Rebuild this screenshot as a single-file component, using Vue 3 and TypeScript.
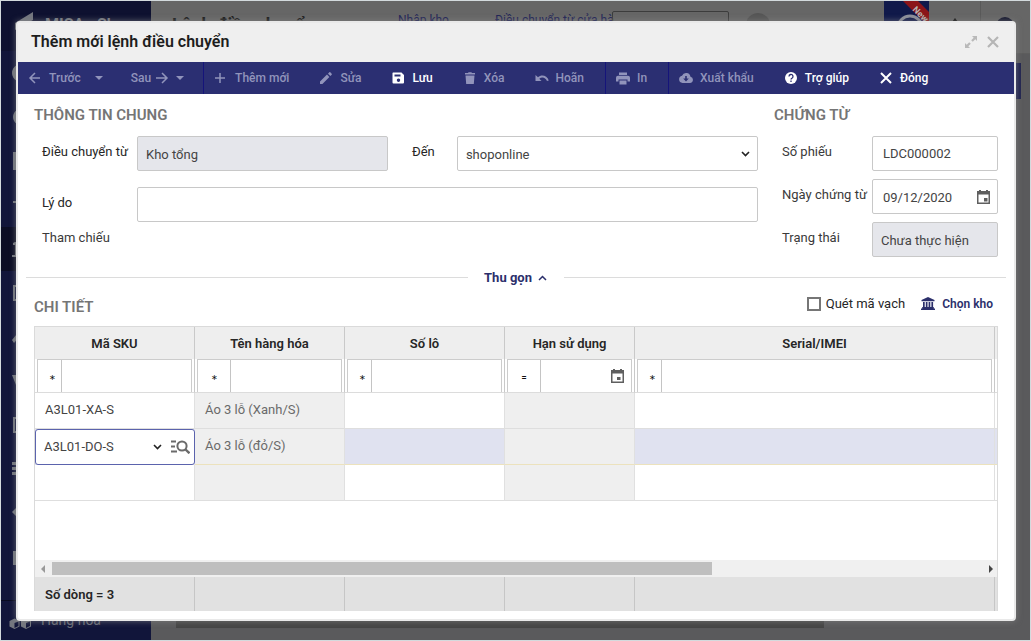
<script setup lang="ts">
import { ref } from 'vue'

interface Tool {
  label: string
  icon: string
  active?: boolean
  caret?: boolean
  trailing?: boolean
  divider?: boolean
}

const icons: Record<string, string> = {
  back: 'M7 2 2 7l5 5M2 7h10',
  forward: 'M7 2l5 5-5 5M12 7H1',
  plus: 'M6 2v10M1 7h10',
  close: 'M2 2l10 10M12 2 2 12',
}

const solids: Record<string, string> = {
  edit: 'M1 10.6V13h2.4l7-7L8 3.6zM12.7 3.7a.8.8 0 0 0 0-1L11.300 1.300a.8.8 0 0 0-1 0L9 2.700 11.400 5z',
  save: 'M2 1.500h8.500L13 4v7.500a1 1 0 0 1-1 1H2.500a1 1 0 0 1-1-1v-9.500zM3.500 3.500v2h6v-2zM7.500 7.500a1.700 1.700 0 1 0 .01 0z',
  trash: 'M2.500 4.500h9l-.7 8.500H3.200zM2 2h3l.6-.8h2.800l.6.8h3v1.500H2z',
  undo: 'M0.500 4v6h6L4.300 7.800C7 5.500 10.500 6.500 12 10l1.800-.6C12 4.500 6.500 3 3 6.300z',
  print: 'M3 1.500h8V4H3zM2 4.700h10a2 2 0 0 1 2 2V10.500h-2.500V8.500h-9v2H0V6.700a2 2 0 0 1 2-2zM3.500 9.500h7v4h-7z',
  cloud: 'M11.500 5.700A4.500 4.500 0 0 0 3 4.700 3.700 3.700 0 0 0 3.500 12h7.500a3.200 3.200 0 0 0 .5-6.300zM6.200 5h1.600v2.500h2L7 10.500l-2.800-3h2z',
}

const tools: Tool[] = [
  { label: 'Trước', icon: 'back', caret: true },
  { label: 'Sau', icon: 'forward', caret: true, trailing: true, divider: true },
  { label: 'Thêm mới', icon: 'plus' },
  { label: 'Sửa', icon: 'edit' },
  { label: 'Lưu', icon: 'save', active: true },
  { label: 'Xóa', icon: 'trash' },
  { label: 'Hoãn', icon: 'undo', divider: true },
  { label: 'In', icon: 'print', divider: true },
  { label: 'Xuất khẩu', icon: 'cloud' },
  { label: 'Trợ giúp', icon: 'help', active: true },
  { label: 'Đóng', icon: 'close', active: true },
]

const columns = [
  { label: 'Mã SKU', key: 'sku', op: '∗' },
  { label: 'Tên hàng hóa', key: 'name', op: '∗' },
  { label: 'Số lô', key: 'lot', op: '∗' },
  { label: 'Hạn sử dụng', key: 'expiry', op: '=' },
  { label: 'Serial/IMEI', key: 'serial', op: '∗' },
]

const rows = ref([
  { sku: 'A3L01-XA-S', name: 'Áo 3 lỗ (Xanh/S)', selected: false },
  { sku: 'A3L01-DO-S', name: 'Áo 3 lỗ (đỏ/S)', selected: true },
  { sku: '', name: '', selected: false },
])

const destination = ref('shoponline')
const reason = ref('')
const number = ref('LDC000002')
const date = ref('09/12/2020')
const scan = ref(false)

const navIcons = [
  'M9 0a9 9 0 1 0 .01 0z',
  'M9 1a8 8 0 1 0 .01 0z',
  'M1 0h16v18H1z',
  'M1 5h16v2h-6v9H7V7H1z',
  'M3 2h4v13h3v2H0v-2h3V5H1V3z',
  'M1 1h16v16H1zM3 3v12h12V3z',
  'M9 1 0 12l2 3 7-8 7 8 2-3z',
  'M0 3h5l2 8h9v2H4z',
  'M1 1h16v16H1zM3 3v12h12V3z',
  'M0 2h4v3H0zM0 7h4v3H0zM0 12h4v3H0zM6 2h11v3H6zM6 7h11v3H6zM6 12h11v3H6z',
  'M0 8l6-6v4h10v4H6v4z',
  'M1 3h16v14H1zM4 0h3v5H4z',
]
</script>

<template>
  <div class="page">
    <aside class="sidebar">
      <div class="brand">
        <svg width="20" height="26" viewBox="0 0 20 26"><path d="M0 11 18 0v8L0 18z" /></svg>
        <span>MISA eShop</span>
      </div>
      <nav>
        <div v-for="(d, i) in navIcons" :key="i" class="nav-row" :class="{ current: i === 4 }">
          <svg width="18" height="18" viewBox="0 0 18 18"><path :d="d" fill-rule="evenodd" /></svg>
        </div>
      </nav>
      <a class="nav-last" href="#">
        <svg width="23" height="18" viewBox="0 0 23 18">
          <path d="M5.500 7.500 10.500 10v5.500l-5 2.500-5-2.500V10zM17 7.500l5 2.500v5.500l-5 2.500-5-2.500V10zM11 0l4 2v4l-4 2-4-2V2z" />
          <path d="M5.500 12v5l4-2v-4.500zM17 12v5l4-2v-4.500z" fill="#11153a" />
        </svg>
        Hàng hóa
      </a>
    </aside>

    <main class="backdrop">
      <header class="app-header">
        <h2>Lệnh điều chuyển</h2>
        <a class="link-a" href="#">Nhập kho</a>
        <a class="link-b" href="#">Điều chuyển từ cửa hà</a>
        <span class="search"></span>
        <span class="avatar"></span>
        <span class="logo">
          <svg width="45" height="40" viewBox="0 0 45 40">
            <circle cx="26" cy="27" r="12" fill="none" stroke="#8c8f9b" stroke-width="3" />
            <path d="M19 0h15l11 11v15z" fill="#8b1519" />
            <text x="28" y="9" transform="rotate(45 28 9)" fill="#b5b5b5" font-size="9" font-weight="700">New</text>
          </svg>
        </span>
        <svg class="up" width="12" height="10" viewBox="0 0 12 10"><path d="M6 0l6 8H0z" fill="#111" /></svg>
        <span class="dot"></span>
      </header>
      <div class="app-body"><span class="strip"></span></div>
      <div class="app-scroll"><span></span></div>
    </main>

    <section class="dialog" role="dialog" aria-labelledby="dialog-title">
      <header class="dialog-head">
        <h1 id="dialog-title">Thêm mới lệnh điều chuyển</h1>
        <button type="button" aria-label="Phóng to">
          <svg width="12" height="12" viewBox="0 0 12 12">
            <path d="M7 0h5v5l-1.700-1.700-2.500 2.500L6.200 4.200l2.500-2.500zM5 12H0V7l1.700 1.700 2.500-2.500 1.600 1.600-2.500 2.500z" fill="#b9b9b9" />
          </svg>
        </button>
        <button type="button" aria-label="Đóng cửa sổ">
          <svg width="12" height="12" viewBox="0 0 12 12"><path d="M1 1l10 10M11 1 1 11" stroke="#b5b5b5" stroke-width="2.200" /></svg>
        </button>
      </header>

      <div class="toolbar" role="toolbar">
        <button
          v-for="t in tools"
          :key="t.label"
          type="button"
          :class="{ active: t.active, trailing: t.trailing, divider: t.divider }"
        >
          <svg v-if="t.icon === 'help'" width="14" height="14" viewBox="0 0 14 14">
            <circle cx="7" cy="7" r="6" fill="currentColor" />
            <path d="M5 5.500a2 2 0 1 1 3 1.700c-.7.400-1 .7-1 1.400M7 9.600v1.300" fill="none" stroke="#2b2f72" stroke-width="1.300" />
          </svg>
          <svg v-else-if="solids[t.icon]" width="14" height="14" viewBox="0 0 14 14">
            <path :d="solids[t.icon]" fill="currentColor" fill-rule="evenodd" />
          </svg>
          <svg v-else width="14" height="14" viewBox="0 0 14 14">
            <path :d="icons[t.icon]" fill="none" stroke="currentColor" :stroke-width="t.icon === 'close' ? 2 : 1.5" />
          </svg>
          <span>{{ t.label }}</span>
          <i v-if="t.caret"></i>
        </button>
      </div>

      <div class="content">
        <form class="form" @submit.prevent>
          <section class="general">
            <h3>THÔNG TIN CHUNG</h3>
            <div class="general-grid">
              <label for="from">Điều chuyển từ</label>
              <input id="from" class="field wide" value="Kho tổng" disabled />
              <label for="to" class="to">Đến</label>
              <div class="box select">
                <select id="to" v-model="destination"><option>shoponline</option></select>
                <svg width="9" height="6" viewBox="0 0 9 6"><path d="M1 1l3.500 3.500L8 1" fill="none" stroke="#222" stroke-width="1.600" /></svg>
              </div>
              <label for="reason" class="second">Lý do</label>
              <input id="reason" v-model="reason" class="field second span" />
              <span class="label">Tham chiếu</span>
            </div>
          </section>
          <section class="voucher">
            <h3>CHỨNG TỪ</h3>
            <div class="voucher-grid">
              <label for="number">Số phiếu</label>
              <input id="number" v-model="number" class="field" />
              <label for="date">Ngày chứng từ</label>
              <div class="box">
                <input id="date" v-model="date" />
                <button type="button" aria-label="Chọn ngày">
                  <svg width="13" height="14" viewBox="0 0 13 14"><path d="M0 1h2V0h2v1h5V0h2v1h2v13H0zM1.500 4.500v8h10v-8zM7 8h3.500v3.500H7z" fill="#5f5f5f" fill-rule="evenodd" /></svg>
                </button>
              </div>
              <label for="status">Trạng thái</label>
              <input id="status" class="field status" value="Chưa thực hiện" disabled />
            </div>
          </section>
        </form>

        <div class="collapse">
          <button type="button">
            Thu gọn
            <svg width="9" height="6" viewBox="0 0 9 6"><path d="M1 5l3.500-3.500L8 5" fill="none" stroke="#2b2f6b" stroke-width="1.500" /></svg>
          </button>
        </div>

        <div class="detail-head">
          <h3>CHI TIẾT</h3>
          <div class="detail-actions">
            <label class="scan"><input v-model="scan" type="checkbox" />Quét mã vạch</label>
            <button type="button">
              <svg width="14" height="13" viewBox="0 0 14 13">
                <path d="M7 0l6.500 3v1.200H.5V3zM2 5h1.700v5H2zM4.800 5h1.700v5H4.800zM7.600 5h1.700v5H7.600zM10.400 5h1.700v5h-1.700zM1.200 10h11.600v1.500H1.200zM0 11.500h14V13H0z" fill="#2b2f6b" />
              </svg>
              Chọn kho
            </button>
          </div>
        </div>

        <div class="grid">
          <table>
            <colgroup>
              <col class="c160" /><col class="c150" /><col class="c160" /><col class="c130" /><col /><col class="c2" />
            </colgroup>
            <thead>
              <tr class="heads">
                <th v-for="c in columns" :key="c.key" scope="col">{{ c.label }}</th>
                <td></td>
              </tr>
              <tr class="filters">
                <td v-for="c in columns" :key="c.key">
                  <div class="filter" :class="c.key">
                    <button type="button" :aria-label="'Điều kiện ' + c.label">{{ c.op }}</button>
                    <div class="filter-value">
                      <input :aria-label="'Lọc ' + c.label" />
                      <svg v-if="c.key === 'expiry'" width="13" height="14" viewBox="0 0 13 14"><path d="M0 1h2V0h2v1h5V0h2v1h2v13H0zM1.500 4.500v8h10v-8zM6 8h3.500v3H6z" fill="#5f5f5f" fill-rule="evenodd" /></svg>
                    </div>
                  </div>
                </td>
                <td></td>
              </tr>
            </thead>
            <tbody>
              <tr v-for="(r, i) in rows" :key="i" :class="{ selected: r.selected }">
                <td v-if="r.selected" class="edit-cell">
                  <div class="editor">
                    <input v-model="r.sku" aria-label="Mã SKU" />
                    <button type="button" aria-label="Mở danh sách">
                      <svg width="9" height="6" viewBox="0 0 9 6"><path d="M1 1l3.500 3.500L8 1" fill="none" stroke="#222" stroke-width="1.600" /></svg>
                    </button>
                    <button type="button" aria-label="Tìm kiếm">
                      <svg width="19" height="14" viewBox="0 0 19 14">
                        <path d="M0 1.500h5M0 6.500h4M0 11.500h6" stroke="#6b6b6b" stroke-width="2" />
                        <circle cx="11" cy="6" r="4.600" fill="none" stroke="#6b6b6b" stroke-width="2" />
                        <path d="M14 9l4.500 4.300" stroke="#6b6b6b" stroke-width="2.400" />
                      </svg>
                    </button>
                  </div>
                </td>
                <td v-else>{{ r.sku }}</td>
                <td class="locked">{{ r.name }}</td>
                <td></td>
                <td class="locked"></td>
                <td></td>
                <td></td>
              </tr>
            </tbody>
          </table>
          <div class="space"></div>
          <div class="scrollbar">
            <i class="left"></i>
            <div class="track"><span></span></div>
            <i class="right"></i>
          </div>
          <div class="summary">
            <span class="c160">Số dòng = 3</span><span class="c150"></span><span class="c160"></span><span class="c130"></span><span class="rest"></span><span class="c2"></span>
          </div>
        </div>
      </div>
    </section>
  </div>
</template>

<style>
body {
  margin: 0;
}
</style>

<style scoped>
.page,
.page * {
  box-sizing: border-box;
}
.page {
  position: relative;
  display: flex;
  height: 100vh;
  border: 1px solid #d3dadd;
  overflow: hidden;
  font: 400 13px/20px Roboto, "Liberation Sans", sans-serif;
  color: #262626;
}
h1,
h2,
h3 {
  margin: 0;
}
button,
input,
select {
  font: inherit;
  color: inherit;
  border: 0;
  padding: 0;
  margin: 0;
  background: none;
  outline: 0;
  min-width: 0;
}
a {
  text-decoration: none;
}
svg {
  display: block;
  flex: none;
}

.sidebar {
  flex: none;
  width: 150px;
  display: flex;
  flex-direction: column;
  background: #11153a;
  color: #777b83;
  fill: #74777f;
  overflow: hidden;
}
.brand {
  display: flex;
  flex: none;
  gap: 10px;
  height: 50px;
  padding: 11px 0 0 14px;
  font-size: 16px;
  line-height: 26px;
  font-weight: 700;
  background: #0e1130;
}
.nav-row {
  display: flex;
  align-items: center;
  height: 44px;
  padding-left: 11px;
}
.current {
  background: #0b0d24;
}
.nav-last {
  display: flex;
  align-items: center;
  gap: 9px;
  height: 40px;
  margin-top: auto;
  padding: 0 0 2px 8px;
  border-top: 1px solid #080a20;
  font-size: 14px;
  color: #6b6e78;
}

.backdrop {
  flex: 1;
  display: flex;
  flex-direction: column;
  background: #5a5a5c;
}
.app-header {
  display: flex;
  align-items: flex-start;
  height: 53px;
  padding-left: 21px;
  background: #666;
  border-bottom: 1px solid #5d5d5d;
  overflow: hidden;
}
.app-header > * {
  flex: none;
}
.app-header h2 {
  width: 226px;
  margin-top: 12px;
  font-size: 18px;
  line-height: 24px;
  font-weight: 700;
  color: #1b1b1b;
}
.app-header a {
  margin-top: 9px;
  font-size: 12px;
  color: #1f2356;
  white-space: nowrap;
}
.link-a {
  width: 97px;
}
.link-b {
  width: 117px;
}
.search {
  width: 117px;
  height: 32px;
  margin-top: 10px;
  border: 1px solid #3c3c3c;
  border-radius: 2px;
}
.avatar {
  width: 24px;
  height: 24px;
  margin: 12px 0 0 17px;
  border-radius: 50%;
  background: #565656;
}
.logo {
  width: 45px;
  height: 40px;
  margin-left: 114px;
  background: #10194a;
}
.up {
  margin: 17px 19px 0 20px;
}
.dot {
  align-self: stretch;
  border-left: 1px solid #595959;
  padding: 16px 0 0 15px;
}
.dot::after {
  content: "";
  display: block;
  width: 18px;
  height: 18px;
  border-radius: 50%;
  background: #14162e;
}
.app-body {
  flex: 1;
  padding: 9px 9px 0 0;
}
.strip {
  display: block;
  height: 36px;
  background: #20234f;
}
.app-scroll {
  height: 20px;
  padding: 1px 206px 12px 25px;
}
.app-scroll span {
  display: block;
  height: 7px;
  background: #454545;
}

.dialog {
  position: absolute;
  inset: 20px 14px 19px 15px;
  display: flex;
  flex-direction: column;
  border: 2px solid #e9e9e9;
  border-radius: 4px;
  background: #fff;
  box-shadow: 0 0 6px rgba(136, 136, 136, 0.7);
  overflow: hidden;
}
.dialog-head {
  display: flex;
  flex: none;
  align-items: center;
  gap: 10px;
  height: 39px;
  padding: 0 15px 2px 13px;
  background: #efefef;
}
.dialog-head h1 {
  flex: 1;
  font-size: 16px;
  line-height: 24px;
  font-weight: 600;
  color: #1d1d1d;
}

.toolbar {
  display: flex;
  flex: none;
  height: 32px;
  background: #2b2f72;
}
.toolbar button {
  display: flex;
  align-items: center;
  gap: 7px;
  padding: 0 20px 0 10px;
  font-size: 12px;
  font-weight: 500;
  color: #9194bb;
  white-space: nowrap;
}
.toolbar .active {
  color: #fff;
}
.toolbar .divider {
  padding-right: 21px;
  border-right: 1px solid #15147a;
}
.toolbar i {
  border: 4px solid transparent;
  border-top-color: currentColor;
  border-bottom: 0;
  margin-left: 7px;
}
.toolbar .trailing {
  gap: 4px;
  padding: 0 19px 0 8px;
}
.trailing svg {
  order: 1;
}
.trailing i {
  order: 2;
  margin-left: 3px;
}

.content {
  flex: 1;
  display: flex;
  flex-direction: column;
  padding: 11px 16px 8px;
}
h3 {
  font-size: 15px;
  line-height: 20px;
  font-weight: 600;
  color: #757575;
}
.form {
  display: flex;
  gap: 16px;
}
.general {
  flex: 1;
}
.voucher {
  flex: none;
  width: 224px;
}
.general-grid,
.voucher-grid {
  display: grid;
  margin-top: 11px;
  padding-left: 8px;
}
.general-grid {
  grid-template-columns: 95px 5fr 69px 6fr;
}
.voucher-grid {
  grid-template-columns: 90px minmax(0, 1fr);
  row-gap: 8px;
}
.general-grid label,
.voucher-grid label,
.label {
  line-height: 32px;
  white-space: nowrap;
}
.label,
.voucher-grid label {
  color: #3a3a3a;
}
.to {
  padding-left: 24px;
}
.second {
  margin-top: 16px;
}
.span {
  grid-column: 2 / -1;
}
.field,
.box {
  height: 35px;
  border: 1px solid #c8c8c8;
  border-radius: 2px;
  background: #fff;
  color: #444;
}
.field {
  width: 100%;
  padding: 0 10px;
}
.field.wide,
.field.status {
  padding: 2px 8px 0;
}
.field:disabled {
  background: #e5e6eb;
}
.box {
  display: flex;
  align-items: center;
  padding: 0 7px 0 10px;
}
.box input {
  flex: 1;
  padding-top: 2px;
}
.select {
  padding-left: 8px;
}
.select select {
  flex: 1;
  padding-top: 2px;
  appearance: none;
}

.collapse {
  display: flex;
  align-items: center;
  gap: 16px;
  height: 20px;
  margin: 10px -8px 0;
}
.collapse::before,
.collapse::after {
  content: "";
  flex: 1;
  height: 1px;
  background: #dcdcdc;
}
.collapse button {
  display: flex;
  align-items: center;
  gap: 6px;
  padding: 1px 1px 0 0;
  font-weight: 700;
  color: #2b2f6b;
}
.detail-head {
  display: flex;
  align-items: center;
  justify-content: space-between;
  height: 39px;
}
.detail-actions {
  display: flex;
  align-items: center;
  gap: 16px;
  margin-bottom: 6px;
  padding-right: 5px;
}
.scan {
  display: flex;
  align-items: center;
  gap: 5px;
}
.scan input {
  appearance: none;
  width: 14px;
  height: 14px;
  border: 2px solid #767676;
}
.detail-actions button {
  display: flex;
  align-items: center;
  gap: 7px;
  font-size: 12px;
  font-weight: 600;
  color: #2b2f6b;
}

.grid {
  flex: 1;
  display: flex;
  flex-direction: column;
  border: 1px solid #dadada;
  border-bottom: 0;
}
.c160 {
  width: 160px;
}
.c150 {
  width: 150px;
}
.c130 {
  width: 130px;
}
.c2 {
  width: 2px;
}
table {
  width: 100%;
  table-layout: fixed;
  border-collapse: separate;
  border-spacing: 0;
}
th,
td {
  padding: 0 0 0 10px;
  border-right: 1px solid #e0e0e0;
  text-align: left;
}
tr > :last-child {
  padding: 0;
  border-right: 0;
}
.heads > * {
  height: 32px;
  padding: 2px 0 0;
  background: #eee;
  border-right-color: #c9c9c9;
  text-align: center;
  font-weight: 600;
}
.filters td {
  height: 34px;
  padding: 0 2px;
  border-right-color: #c9c9c9;
  border-bottom: 1px solid #dcdcdc;
}
.filters td:last-child {
  padding: 0;
}
.filter {
  display: flex;
  height: 33px;
  border: 1px solid #ccc;
  border-bottom: 0;
}
.filter button {
  flex: none;
  width: 24px;
  padding: 3px 0 0 6px;
  border-right: 1px solid #c4c4c4;
  font-size: 8px;
  color: #111;
}
.filter.name button,
.filter.expiry button {
  width: 33px;
  padding-left: 0;
}
.filter.expiry button {
  font-size: 10px;
}
.filter-value {
  flex: 1;
  display: flex;
  align-items: center;
  min-width: 0;
  padding-right: 7px;
}
.filter-value input {
  flex: 1;
  width: 20px;
}
tbody td {
  height: 36px;
  padding-bottom: 2px;
  border-bottom: 1px solid #dedede;
  color: #444;
}
tbody .locked {
  background: #efefef;
  color: #6a6a6a;
}
.selected td:not(.locked) {
  background: #e0e2f0;
}
.selected td {
  border-bottom-color: #ece2bd;
}
.selected .edit-cell {
  padding: 0;
  border: 0;
}
.editor {
  display: flex;
  align-items: center;
  gap: 9px;
  height: 36px;
  padding: 0 4px 0 8px;
  border: 1px solid #5b63ad;
  border-radius: 3px;
  background: #fff;
}
.editor input {
  flex: 1;
}
.space {
  flex: 1;
}
.scrollbar {
  display: flex;
  align-items: center;
  flex: none;
  height: 17px;
  background: #f0f0f0;
}
.scrollbar i {
  border: 4px solid transparent;
}
.scrollbar .left {
  margin: 0 7px 0 2px;
  border-right-color: #999;
}
.scrollbar .right {
  margin: 0 0 0 7px;
  border-left-color: #444;
}
.track {
  flex: 1;
}
.track span {
  display: block;
  width: 71%;
  height: 13px;
  background: #bfbfbf;
}
.summary {
  display: flex;
  flex: none;
  height: 34px;
  background: #e1e1e1;
  line-height: 35px;
  font-weight: 600;
}
.summary span {
  flex: none;
  padding-left: 10px;
  border-right: 1px solid #c6c6c6;
}
.summary .rest {
  flex: 1;
}
.summary span:last-child {
  padding: 0;
  border: 0;
}
</style>
